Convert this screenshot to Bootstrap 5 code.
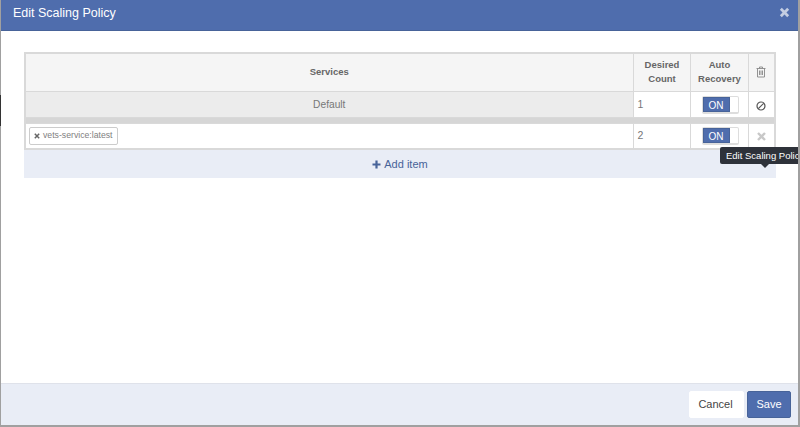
<!DOCTYPE html>
<html lang="en">
<head>
<meta charset="utf-8">
<title>Edit Scaling Policy</title>
<link href="https://cdn.jsdelivr.net/npm/bootstrap@5.3.0/dist/css/bootstrap.min.css" rel="stylesheet">
<style>
html,body{height:427px;overflow:hidden;background:#a0a0a0;}
body{font-family:"Liberation Sans",Arial,sans-serif;color:#555;font-size:11px;}
.shell{width:797px;height:425px;margin:0 0 0 1px;background:#fff;position:relative;}
.edge-mark{position:absolute;left:-1px;top:95px;width:1px;height:31px;background:#333;}
.head-bar{height:31px;background:#4f6dad;border-bottom:1px solid #476399;color:#fff;font-size:12.5px;padding:0 8px 6px 12px;}
.head-title{margin-top:2px;}
.close-x{color:#c3cde2;width:11px;height:11px;}
.body-area{height:352px;padding:21px 23px 0 23px;}
.policy-table{width:752px;table-layout:fixed;border-collapse:collapse;border:2px solid #d9d9d9;margin:0;}
.policy-table th,.policy-table td{border:1px solid #d9d9d9;padding:0;text-align:center;vertical-align:middle;}
.policy-table th{background:#f5f5f5;font-size:9.5px;font-weight:700;line-height:14px;height:38px;color:#666;padding-bottom:1px;}
.policy-table th.cell-shift{padding-left:1px;}
.policy-table td.cell-shift{padding-left:2px;}
.policy-table .row-default td{height:26px;padding-top:2px;}
.cell-default{background:#ececec;font-size:10.2px;color:#777;}
.policy-table td.cell-count{text-align:left;padding-left:4px;font-size:10.5px;color:#777;background:#fff;}
.row-gap td{height:6px;background:#d6d6d6;}
.row-item td{height:26px;}
.policy-table td.cell-tags{text-align:left;padding-left:3px;}
.tag-chip{display:inline-flex;align-items:center;gap:3px;height:18px;padding:0 4px;border:1px solid #ccc;border-radius:2px;font-size:8.7px;color:#808080;background:#fff;}
.toggle-box{display:inline-flex;width:37px;height:18px;border:1px solid #ddd;border-bottom-width:2px;border-radius:2px;background:#fff;vertical-align:middle;}
.toggle-on{width:27px;background:#4f6dad;border:1px solid #476399;color:#fff;font-size:10px;line-height:15px;text-align:center;}
.add-row{height:28px;width:752px;background:#e9edf6;color:#476399;font-size:11px;gap:3px;}
.foot-bar{height:42px;background:#e9edf6;border-top:1px solid #dfe2ea;padding-right:7px;gap:3px;}
.foot-btn{width:55px;height:27px;padding:0;font-size:11px;border-radius:2px;}
.btn-cancel{background:#fff;color:#444;border:1px solid #fff;padding-right:2px;}
.btn-save{width:44px;background:#4f6dad;color:#fff;border:1px solid #476399;}
.tip-box{position:absolute;left:719px;top:147px;background:#2e323a;color:#fff;font-size:9.5px;line-height:17px;height:17px;padding:0 0 0 6px;width:78px;white-space:nowrap;overflow:hidden;border-radius:2px 0 0 2px;}
.tip-arrow{position:absolute;left:760px;top:164px;width:0;height:0;border-left:4px solid transparent;border-right:4px solid transparent;border-top:4px solid #2e323a;}
</style>
</head>
<body>
<div class="shell">
  <span class="edge-mark"></span>
  <div class="head-bar d-flex align-items-center justify-content-between">
    <span class="head-title">Edit Scaling Policy</span>
    <svg class="close-x" viewBox="0 0 12 12" aria-hidden="true"><path d="M2 2 10 10M10 2 2 10" stroke="currentColor" stroke-width="3" fill="none"/></svg>
  </div>
  <div class="body-area">
    <table class="policy-table">
      <colgroup><col style="width:608px"><col style="width:57px"><col style="width:58px"><col></colgroup>
      <thead><tr>
        <th>Services</th>
        <th class="cell-shift">Desired<br>Count</th>
        <th class="cell-shift">Auto<br>Recovery</th>
        <th><svg width="10" height="12" viewBox="0 0 10 12" aria-hidden="true"><path d="M.5 2.500h9M3.500 2.500V1h3v1.500M1.500 2.500v8.500h7V2.500M3.500 4.500v4.500M5 4.500v4.500M6.500 4.500v4.500" stroke="#888" stroke-width=".9" fill="none"/></svg></th>
      </tr></thead>
      <tbody>
        <tr class="row-default">
          <td class="cell-default">Default</td>
          <td class="cell-count">1</td>
          <td class="cell-shift"><span class="toggle-box"><span class="toggle-on">ON</span></span></td>
          <td><svg width="10" height="10" viewBox="0 0 10 10" aria-hidden="true"><circle cx="5" cy="5" r="4" stroke="#555" stroke-width="1.200" fill="none"/><path d="M2.300 7.700 7.700 2.300" stroke="#555" stroke-width="1.200"/></svg></td>
        </tr>
        <tr class="row-gap"><td colspan="4"></td></tr>
        <tr class="row-item">
          <td class="cell-tags"><span class="tag-chip"><svg width="6" height="6" viewBox="0 0 6 6" aria-hidden="true"><path d="M.8.800 5.200 5.200M5.200.800 .8 5.200" stroke="#666" stroke-width="1.500"/></svg>vets-service:latest</span></td>
          <td class="cell-count">2</td>
          <td class="cell-shift"><span class="toggle-box"><span class="toggle-on">ON</span></span></td>
          <td><svg width="9" height="9" viewBox="0 0 9 9" aria-hidden="true"><path d="M1 1 8 8M8 1 1 8" stroke="#c8c8c8" stroke-width="2.400"/></svg></td>
        </tr>
      </tbody>
    </table>
    <div class="add-row d-flex align-items-center justify-content-center">
      <svg width="9" height="9" viewBox="0 0 9 9" aria-hidden="true"><path d="M4.500 .5v8M.5 4.500h8" stroke="#476399" stroke-width="2.200"/></svg>
      <span>Add item</span>
    </div>
  </div>
  <div class="foot-bar d-flex align-items-center justify-content-end">
    <button type="button" class="btn foot-btn btn-cancel">Cancel</button>
    <button type="button" class="btn foot-btn btn-save">Save</button>
  </div>
  <div class="tip-box">Edit Scaling Policy</div>
  <span class="tip-arrow"></span>
</div>
<script src="https://cdn.jsdelivr.net/npm/bootstrap@5.3.0/dist/js/bootstrap.bundle.min.js"></script>
</body>
</html>
